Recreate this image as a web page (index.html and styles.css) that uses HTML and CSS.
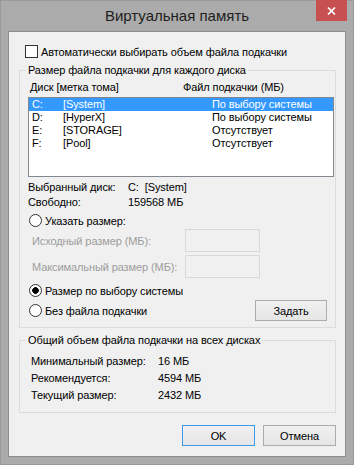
FILE: index.html
```html
<!DOCTYPE html>
<html lang="ru">
<head>
    <meta charset="UTF-8">
    <title>Виртуальная память</title>
    <link rel="stylesheet" href="styles.css">
</head>
<body>
    <div class="window">
        <div class="titlebar">
            <span class="title">Виртуальная память</span>
            <span class="close">
                <svg width="9" height="8" viewBox="0 0 9 8"><path d="M1 0.5L8 7.5M8 0.5L1 7.5" stroke="#fff" stroke-width="1.7"/></svg>
            </span>
        </div>
        <div class="client">
            <label class="check-row"><span class="checkbox"></span>Автоматически выбирать объем файла подкачки</label>

            <fieldset class="group group-disks">
                <legend>Размер файла подкачки для каждого диска</legend>
                <div class="list-head"><span>Диск [метка тома]</span><span>Файл подкачки (МБ)</span></div>
                <div class="listbox">
                    <div class="list-row selected"><span>C:</span><span>[System]</span><span>По выбору системы</span></div>
                    <div class="list-row"><span>D:</span><span>[HyperX]</span><span>По выбору системы</span></div>
                    <div class="list-row"><span>E:</span><span>[STORAGE]</span><span>Отсутствует</span></div>
                    <div class="list-row"><span>F:</span><span>[Pool]</span><span>Отсутствует</span></div>
                </div>
                <div class="info">
                    <span>Выбранный диск:</span><span>C:&nbsp; [System]</span>
                    <span>Свободно:</span><span>159568 МБ</span>
                </div>
                <label class="radio-row first"><span class="radio"></span>Указать размер:</label>
                <div class="size-row first"><span>Исходный размер (МБ):</span><span class="field"></span></div>
                <div class="size-row"><span>Максимальный размер (МБ):</span><span class="field"></span></div>
                <label class="radio-row second"><span class="radio checked"></span>Размер по выбору системы</label>
                <div class="set-row">
                    <label class="radio-row"><span class="radio"></span>Без файла подкачки</label>
                    <button class="btn set">Задать</button>
                </div>
            </fieldset>

            <fieldset class="group group-total">
                <legend>Общий объем файла подкачки на всех дисках</legend>
                <div class="totals">
                    <span>Минимальный размер:</span><span>16 МБ</span>
                    <span>Рекомендуется:</span><span>4594 МБ</span>
                    <span>Текущий размер:</span><span>2432 МБ</span>
                </div>
            </fieldset>

            <div class="actions">
                <button class="btn default">OK</button>
                <button class="btn">Отмена</button>
            </div>
        </div>
    </div>
</body>
</html>
```

FILE: styles.css
```css
* {
    box-sizing: border-box;
}
body {
    margin: 0;
    background: #fff;
    font-family: 'Liberation Sans', Arial, sans-serif;
    font-size: 11px;
    letter-spacing: -0.1px;
    color: #000;
    white-space: nowrap;
}
.window {
    width: 354px;
    height: 465px;
    background: #ababab;
    box-shadow: inset 0 0 0 1px #999;
    padding: 0 8px 8px;
}
.titlebar {
    position: relative;
    height: 31px;
    margin: 0 -8px;
    display: flex;
    align-items: center;
    justify-content: center;
    padding-bottom: 1px;
}
.title {
    font-size: 15px;
    letter-spacing: 0;
    color: #1e1e1e;
}
.close {
    position: absolute;
    top: 0;
    right: 7px;
    width: 31px;
    height: 21px;
    background: #c75050;
    display: flex;
    align-items: center;
    justify-content: center;
}
.client {
    height: 426px;
    background: #f0f0f0;
    border: 1px solid #8d8d8d;
    padding: 12px 9px 10px 10px;
    display: flex;
    flex-direction: column;
}
.check-row {
    display: flex;
    align-items: center;
    gap: 3px;
    height: 15px;
    margin-left: 6px;
}
.checkbox, .radio {
    flex: none;
    width: 13px;
    height: 13px;
    border: 1px solid #333;
    background: #fff;
}
.radio {
    border-radius: 50%;
}
.radio.checked {
    background: radial-gradient(circle, #000 0 3px, #fff 3.6px);
}
.group {
    width: 317px;
    min-width: 0;
    margin: 4px 0 0;
    padding: 2px 1px 6px 8px;
    border: 1px solid #dcdcdc;
}
.group legend {
    height: 15px;
    line-height: 15px;
    margin-left: -2px;
    padding: 0 2px;
}
.group-total {
    margin-top: 5px;
    padding: 4px 1px 9px 8px;
}
.list-head {
    display: grid;
    grid-template-columns: 153px 1fr;
    height: 15px;
    line-height: 15px;
    padding-left: 2px;
}
.listbox {
    margin-top: 2px;
    height: 80px;
    border: 1px solid #828790;
    background: #fff;
}
.list-row {
    display: grid;
    grid-template-columns: 31px 149px 1fr;
    height: 13px;
    line-height: 13px;
    padding-left: 3px;
}
.list-row.selected {
    background: #3399ff;
    color: #fff;
}
.info {
    display: grid;
    grid-template-columns: 100px 1fr;
    line-height: 15px;
    margin-top: 3px;
}
.radio-row {
    display: flex;
    align-items: center;
    gap: 3px;
    height: 15px;
    margin-left: 1px;
}
.radio-row.first {
    margin-top: 3px;
}
.radio-row.second {
    margin-top: 5px;
}
.size-row {
    display: grid;
    grid-template-columns: 153px 75px;
    align-items: center;
    height: 23px;
    margin-top: 3px;
    padding-left: 4px;
    color: #9d9d9d;
}
.size-row.first {
    margin-top: 1px;
}
.field {
    height: 23px;
    border: 1px solid #d9d9d9;
    background: #f0f0f0;
}
.set-row {
    display: flex;
    justify-content: space-between;
    align-items: center;
    height: 21px;
    margin-top: 2px;
    padding-right: 7px;
}
.set-row .radio-row {
    margin-top: 0;
}
.btn {
    height: 21px;
    width: 73px;
    padding: 0;
    border: 1px solid #acacac;
    background: linear-gradient(#f0f0f0, #e5e5e5);
    font: inherit;
    letter-spacing: inherit;
    color: #000;
}
.btn.set {
    width: 72px;
}
.btn.default {
    border-color: #3c9ae8;
}
.totals {
    display: grid;
    grid-template-columns: 127px 1fr;
    grid-auto-rows: 17px;
    align-items: center;
    padding-left: 3px;
}
.actions {
    margin-top: 12px;
    display: flex;
    justify-content: flex-end;
    gap: 8px;
}
```
